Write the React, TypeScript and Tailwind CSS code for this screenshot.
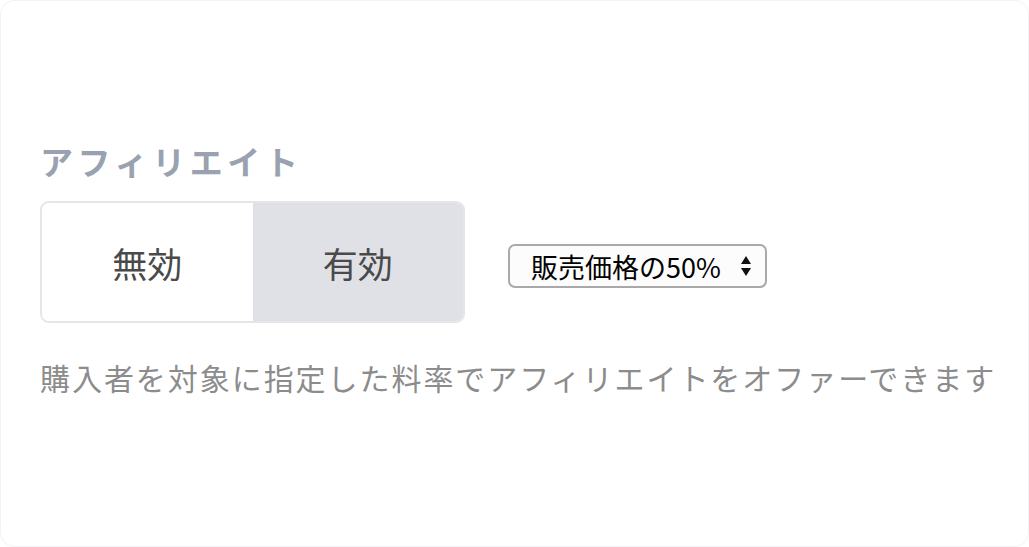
import React, { useState } from "react";

const jp = { fontFamily: '"Noto Sans CJK JP", "Noto Sans", sans-serif' };

export default function App() {
    const [enabled, setEnabled] = useState(true);

    return (
        <div className="w-[1029px] h-[547px] bg-white" style={jp}>
            <div className="h-full w-full rounded-[14px] border border-[#f3f3f5] pt-[138px] pl-[39px]">
                <h2 className="text-[33px] leading-[44px] font-bold tracking-[4.6px] text-[#9aa2b1]">
                    アフィリエイト
                </h2>

                <div className="mt-[18px] flex items-center">
                    <div className="flex h-[122px] w-[425px] overflow-hidden rounded-[9px] border-2 border-[#e3e5e9]">
                        <button
                            className={`flex-1 pt-[2px] text-[35px] text-[#4a4a4a] ${enabled ? "bg-white" : "bg-[#dfe1e6]"}`}
                            onClick={() => setEnabled(false)}
                        >
                            無効
                        </button>
                        <button
                            className={`flex-1 pt-[2px] text-[35px] text-[#4a4a4a] ${enabled ? "bg-[#dfe1e6]" : "bg-white"}`}
                            onClick={() => setEnabled(true)}
                        >
                            有効
                        </button>
                    </div>

                    <div className="ml-[43px] mt-[8px] flex h-[44px] w-[259px] items-center rounded-[7px] border-2 border-[#a9a9a9] bg-[#fcfcfc] pl-[21px] pr-[13px]">
                        <span className="text-[27px] leading-none text-black">販売価格の50%</span>
                        <svg className="ml-auto" width="12" height="22" viewBox="0 0 12 22">
                            <path d="M6 1 L11 9 L1 9 Z" fill="#111" />
                            <path d="M6 21 L11 13 L1 13 Z" fill="#111" />
                        </svg>
                    </div>
                </div>

                <p className="mt-[34px] text-[30px] leading-[40px] tracking-[1.95px] text-[#8c8c8c]">
                    購入者を対象に指定した料率でアフィリエイトをオファーできます
                </p>
            </div>
        </div>
    );
}
